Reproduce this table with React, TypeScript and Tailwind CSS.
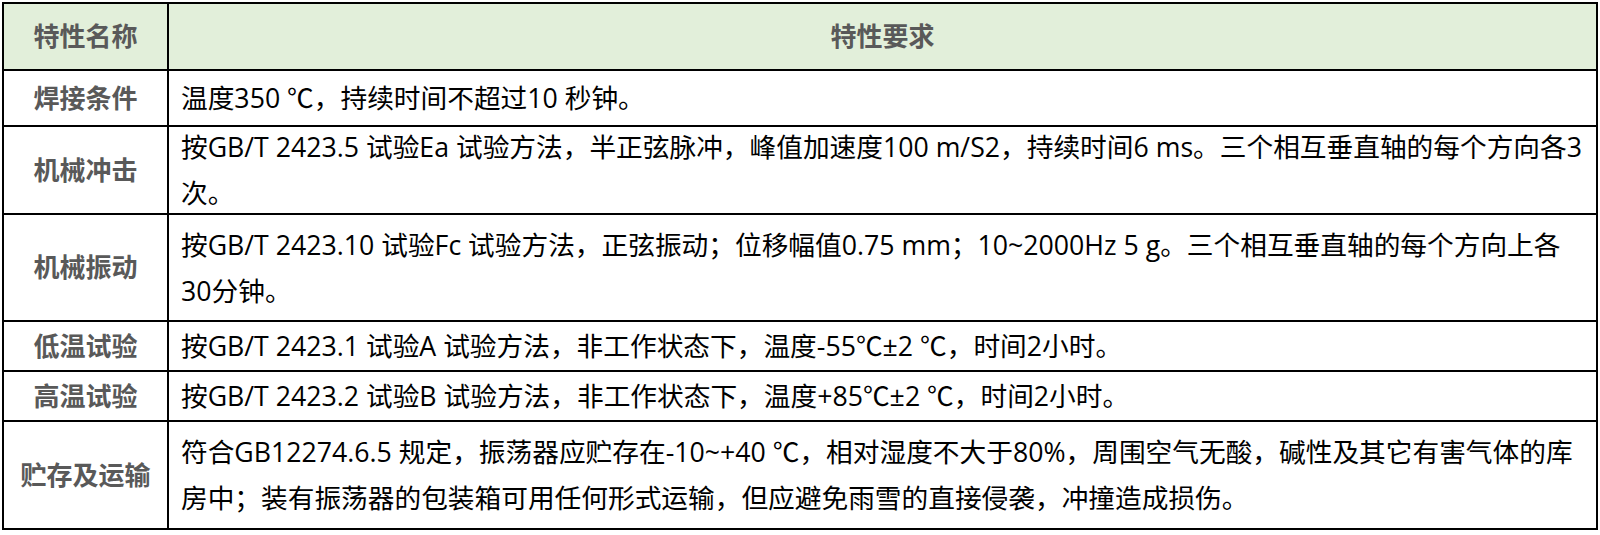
import * as React from 'react';

type SpecRow = {
  name: string;
  lines: string[];
  height: string;
};

const rows: SpecRow[] = [
  {
    name: '焊接条件',
    lines: ['温度350 ℃，持续时间不超过10 秒钟。'],
    height: 'h-[56px]',
  },
  {
    name: '机械冲击',
    lines: [
      '按GB/T 2423.5 试验Ea 试验方法，半正弦脉冲，峰值加速度100 m/S2，持续时间6 ms。三个相互垂直轴的每个方向各3',
      '次。',
    ],
    height: 'h-[88px]',
  },
  {
    name: '机械振动',
    lines: [
      '按GB/T 2423.10 试验Fc 试验方法，正弦振动；位移幅值0.75 mm；10~2000Hz 5 g。三个相互垂直轴的每个方向上各',
      '30分钟。',
    ],
    height: 'h-[107px]',
  },
  {
    name: '低温试验',
    lines: ['按GB/T 2423.1 试验A 试验方法，非工作状态下，温度-55℃±2 ℃，时间2小时。'],
    height: 'h-[50px]',
  },
  {
    name: '高温试验',
    lines: ['按GB/T 2423.2 试验B 试验方法，非工作状态下，温度+85℃±2 ℃，时间2小时。'],
    height: 'h-[50px]',
  },
  {
    name: '贮存及运输',
    lines: [
      '符合GB12274.6.5 规定，振荡器应贮存在-10~+40 ℃，相对湿度不大于80%，周围空气无酸，碱性及其它有害气体的库',
      '房中；装有振荡器的包装箱可用任何形式运输，但应避免雨雪的直接侵袭，冲撞造成损伤。',
    ],
    height: 'h-[106px]',
  },
];

export default function App() {
  return (
    <div className="min-h-[535px] bg-white pl-[2px] pt-[2px] font-['Open_Sans','Noto_Sans_CJK_SC',sans-serif] text-[26px]">
      <div className="flex w-[1596px] flex-col border-2 border-black">
        {/* header */}
        <div className="flex h-[67px] border-b-2 border-black bg-[#e2efda] font-bold text-[#595959]">
          <div className="flex w-[165px] shrink-0 items-center justify-center border-r-2 border-black">
            特性名称
          </div>
          <div className="flex flex-1 items-center justify-center">特性要求</div>
        </div>

        {rows.map((row, i) => (
          <div
            className={`flex ${row.height} ${i < rows.length - 1 ? 'border-b-2 border-black' : ''}`}
            key={row.name}
          >
            <div className="flex w-[165px] shrink-0 items-center justify-center border-r-2 border-black font-bold text-[#595959]">
              {row.name}
            </div>
            <div className="flex flex-1 flex-col justify-center pl-[12px] text-[26.7px] leading-[46px] whitespace-nowrap text-black">
              {row.lines.map((line) => (
                <span key={line}>{line}</span>
              ))}
            </div>
          </div>
        ))}
      </div>
    </div>
  );
}
